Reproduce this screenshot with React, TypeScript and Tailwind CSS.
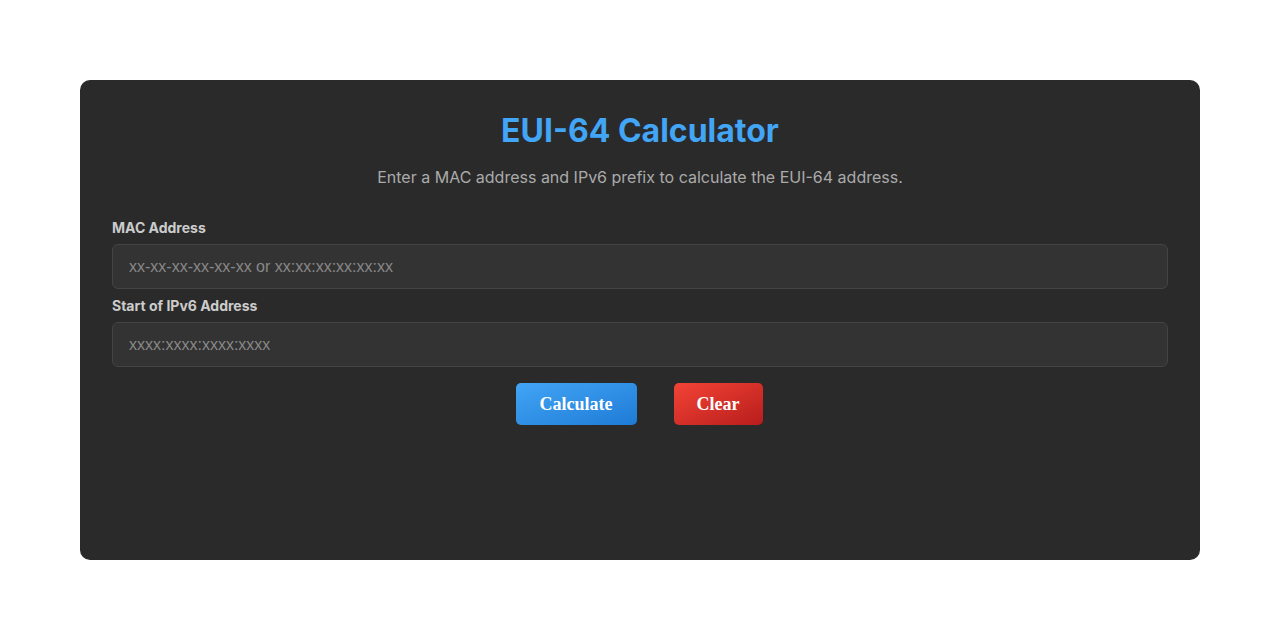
import React, { useState } from 'react'

export default function App() {
  const [mac, setMac] = useState('')
  const [prefix, setPrefix] = useState('')

  const clear = () => {
    setMac('')
    setPrefix('')
  }

  return (
    <div className="min-h-screen bg-white flex justify-center pt-20 px-20 font-['Inter',sans-serif]">
      <div className="w-full h-[480px] bg-[#2a2a2a] rounded-[10px] px-8 pt-8 flex flex-col">
        <h1 className="text-[32px] leading-[38px] font-bold text-[#42a5f5] text-center">EUI-64 Calculator</h1>
        <p className="mt-[15px] text-base leading-6 text-[#aaaaaa] text-center">
          Enter a MAC address and IPv6 prefix to calculate the EUI-64 address.
        </p>

        <label className="mt-[29px] block text-sm leading-5 font-bold text-[#cccccc]">MAC Address</label>
        <input
          value={mac}
          onChange={e => setMac(e.target.value)}
          placeholder="xx-xx-xx-xx-xx-xx or xx:xx:xx:xx:xx:xx"
          className="mt-[6px] h-[45px] w-full rounded-md border border-[#444444] bg-[#333333] px-4 text-base text-[#eeeeee] placeholder:text-[#888888] font-['Liberation_Sans',sans-serif] outline-none"
        />

        <label className="mt-[7px] block text-sm leading-5 font-bold text-[#cccccc]">Start of IPv6 Address</label>
        <input
          value={prefix}
          onChange={e => setPrefix(e.target.value)}
          placeholder="xxxx:xxxx:xxxx:xxxx"
          className="mt-[6px] h-[45px] w-full rounded-md border border-[#444444] bg-[#333333] px-4 text-base text-[#eeeeee] placeholder:text-[#888888] font-['Liberation_Sans',sans-serif] outline-none"
        />

        <div className="mt-4 pr-[2px] flex justify-center gap-[37px] font-['Liberation_Serif',serif]">
          <button className="h-[42px] w-[121px] rounded-[5px] bg-linear-to-br from-[#42a5f5] to-[#1e7bd6] text-white text-[18px] font-bold">
            Calculate
          </button>
          <button
            onClick={clear}
            className="h-[42px] w-[89px] rounded-[5px] bg-linear-to-br from-[#f44336] to-[#b71c1c] text-white text-[18px] font-bold"
          >
            Clear
          </button>
        </div>
      </div>
    </div>
  )
}
